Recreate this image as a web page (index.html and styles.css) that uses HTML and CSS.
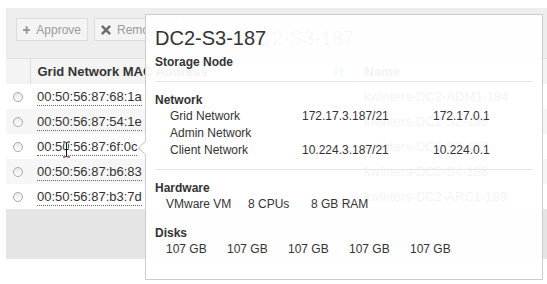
FILE: index.html
```html
<!DOCTYPE html>
<html lang="en">
<head>
  <meta charset="UTF-8" />
  <title>Grid Nodes</title>
  <link rel="stylesheet" href="styles.css">
</head>
<body>

<div class="page">
  <div class="toolbar">
    <button class="btn">
      <svg class="ico" width="10" height="10" viewBox="0 0 10 10"><path d="M3.6 0h2.8v3.6H10v2.8H6.4V10H3.6V6.4H0V3.6h3.6z" fill="#9a9a9a"/></svg>
      Approve
    </button>
    <button class="btn">
      <svg class="ico" width="10" height="10" viewBox="0 0 10 10"><path d="M1.8 0L5 3.2 8.2 0 10 1.8 6.8 5 10 8.2 8.2 10 5 6.8 1.8 10 0 8.2 3.2 5 0 1.8z" fill="#6f6f6f"/></svg>
      Remove
    </button>
  </div>

  <table class="grid">
    <colgroup>
      <col class="c-sel">
      <col class="c-mac">
      <col>
    </colgroup>
    <thead>
      <tr>
        <th></th>
        <th class="divided">
          <div class="th-inner">
            <span>Grid Network MAC Address</span>
            <svg class="sort" width="11" height="11" viewBox="0 0 11 11"><path d="M3 0v8M0.5 5.5L3 8.5 5.5 5.5M8 11V3M5.5 5.5L8 2.5 10.5 5.5" stroke="#3d9ad6" stroke-width="1.6" fill="none"/></svg>
          </div>
        </th>
        <th class="divided">Name</th>
      </tr>
    </thead>
    <tbody>
      <tr><td><span class="radio"></span></td><td><span class="mac">00:50:56:87:68:1a</span></td><td>kwinters-DC2-ADM1-184</td></tr>
      <tr><td><span class="radio"></span></td><td><span class="mac">00:50:56:87:54:1e</span></td><td>kwinters-DC2-S2-186</td></tr>
      <tr><td><span class="radio"></span></td><td><span class="mac">00:50:56:87:6f:0c</span></td><td>kwinters-DC2-S3-187</td></tr>
      <tr><td><span class="radio"></span></td><td><span class="mac">00:50:56:87:b6:83</span></td><td>kwinters-DC2-S4-188</td></tr>
      <tr><td><span class="radio"></span></td><td><span class="mac">00:50:56:87:b3:7d</span></td><td>kwinters-DC2-ARC1-189</td></tr>
    </tbody>
  </table>

  <div class="footer"></div>
</div>

<svg class="ibeam" width="9" height="17" viewBox="0 0 9 17">
  <path d="M1 1h2.5L4.5 2 5.5 1H8M4.5 2v13M1 16h2.5L4.5 15 5.5 16H8M2.5 8.5h4" stroke="#fff" stroke-width="2.4" fill="none"/>
  <path d="M1 1h2.5L4.5 2 5.5 1H8M4.5 2v13M1 16h2.5L4.5 15 5.5 16H8M2.5 8.5h4" stroke="#111" stroke-width="1" fill="none"/>
</svg>

<div class="popover">
  <div class="arrow"></div>
  <div class="pop-title">
    <span class="ghost">DC2-S3-187</span>
    <span class="name">DC2-S3-187</span>
  </div>
  <div class="pop-type">Storage Node</div>
  <hr>
  <div class="section">
    <h4>Network</h4>
    <div class="net-row"><span>Grid Network</span><span>172.17.3.187/21</span><span>172.17.0.1</span></div>
    <div class="net-row"><span>Admin Network</span><span></span><span></span></div>
    <div class="net-row"><span>Client Network</span><span>10.224.3.187/21</span><span>10.224.0.1</span></div>
  </div>
  <hr>
  <div class="section">
    <h4>Hardware</h4>
    <div class="hw-row"><span>VMware VM</span><span>8 CPUs</span><span>8 GB RAM</span></div>
    <h4 class="disks-head">Disks</h4>
    <div class="disk-row"><span>107 GB</span><span>107 GB</span><span>107 GB</span><span>107 GB</span><span>107 GB</span></div>
  </div>
</div>

</body>
</html>
```

FILE: styles.css
```css
body {
  margin: 0;
  background: #fff;
  font-family: "Liberation Sans", Arial, sans-serif;
  color: #333;
  width: 547px;
  height: 284px;
  overflow: hidden;
  position: relative;
}
.page {
  margin: 8px 0 0 6px;
}
.toolbar {
  background: #eeeeee;
  height: 50px;
  box-sizing: border-box;
  padding: 10px 10px 0;
  display: flex;
  gap: 6px;
  align-items: flex-start;
}
.btn {
  height: 23px;
  padding: 0 6px 0 6px;
  border: 1px solid #dcdcdc;
  background: #f4f4f4;
  color: #9a9a9a;
  font-family: inherit;
  font-size: 12px;
  display: flex;
  align-items: center;
  gap: 6px;
}
.btn:first-child {
  width: 72px;
}
.btn:last-child {
  width: 90px;
}
.ico {
  display: block;
}
.grid {
  width: 541px;
  border-collapse: collapse;
  table-layout: fixed;
  font-size: 13px;
}
.c-sel {
  width: 24px;
}
.c-mac {
  width: 327px;
}
.grid th {
  height: 25px;
  padding: 0 7px;
  text-align: left;
  font-weight: bold;
  background: #f4f4f4;
  border-top: 1px solid #e2e2e2;
  box-sizing: border-box;
}
.grid th.divided {
  border-left: 1px solid #dddddd;
}
.th-inner {
  display: flex;
  align-items: center;
  justify-content: space-between;
}
.sort {
  display: block;
  margin-right: 6px;
}
.grid td {
  height: 25px;
  padding: 0 7px;
  white-space: nowrap;
}
.grid td:first-child {
  padding: 0;
  text-align: center;
}
.grid tbody tr:nth-child(even) td {
  background: #f6f6f6;
}
.radio {
  display: inline-block;
  width: 8px;
  height: 8px;
  border: 1px solid #a9a9a9;
  border-radius: 50%;
  background: linear-gradient(#e8e8e8, #fff);
  vertical-align: middle;
}
.mac {
  border-bottom: 1px dotted #666;
  padding-bottom: 1px;
}
.footer {
  height: 50px;
  background: #e5e5e5;
}
.ibeam {
  position: absolute;
  left: 62px;
  top: 141px;
}
.popover {
  position: absolute;
  left: 145px;
  top: 14px;
  width: 378px;
  height: 264px;
  padding: 0 9px;
  border: 1px solid #cccccc;
  background: rgba(255, 255, 255, 0.94);
  font-size: 12px;
  color: #333;
}
.arrow {
  position: absolute;
  left: -6px;
  top: 128px;
  width: 9px;
  height: 9px;
  background: #fff;
  border-left: 1px solid #cccccc;
  border-bottom: 1px solid #cccccc;
  transform: rotate(45deg);
}
.pop-title {
  position: relative;
  margin-top: 11px;
  height: 24px;
  line-height: 24px;
  font-size: 20px;
}
.pop-title .ghost {
  position: absolute;
  left: 88px;
  top: 0;
  color: rgba(0, 0, 0, 0.035);
}
.pop-title .name {
  position: relative;
}
.pop-type {
  margin-top: 4px;
  line-height: 17px;
  font-weight: bold;
}
.popover hr {
  margin: 10px 0 0;
  border: 0;
  border-top: 1px solid #e6e6e6;
}
.section {
  padding-top: 10px;
}
.section h4 {
  margin: 0;
  font-size: 12px;
  line-height: 16px;
}
.net-row {
  display: grid;
  grid-template-columns: 132px 131px auto;
  padding-left: 15px;
  line-height: 17px;
}
.hw-row {
  display: grid;
  grid-template-columns: 82px 63px auto;
  padding-left: 11px;
  line-height: 17px;
}
.disks-head {
  margin-top: 12px !important;
}
.disk-row {
  display: grid;
  grid-template-columns: repeat(5, 61px);
  padding-left: 11px;
  line-height: 17px;
}
```
